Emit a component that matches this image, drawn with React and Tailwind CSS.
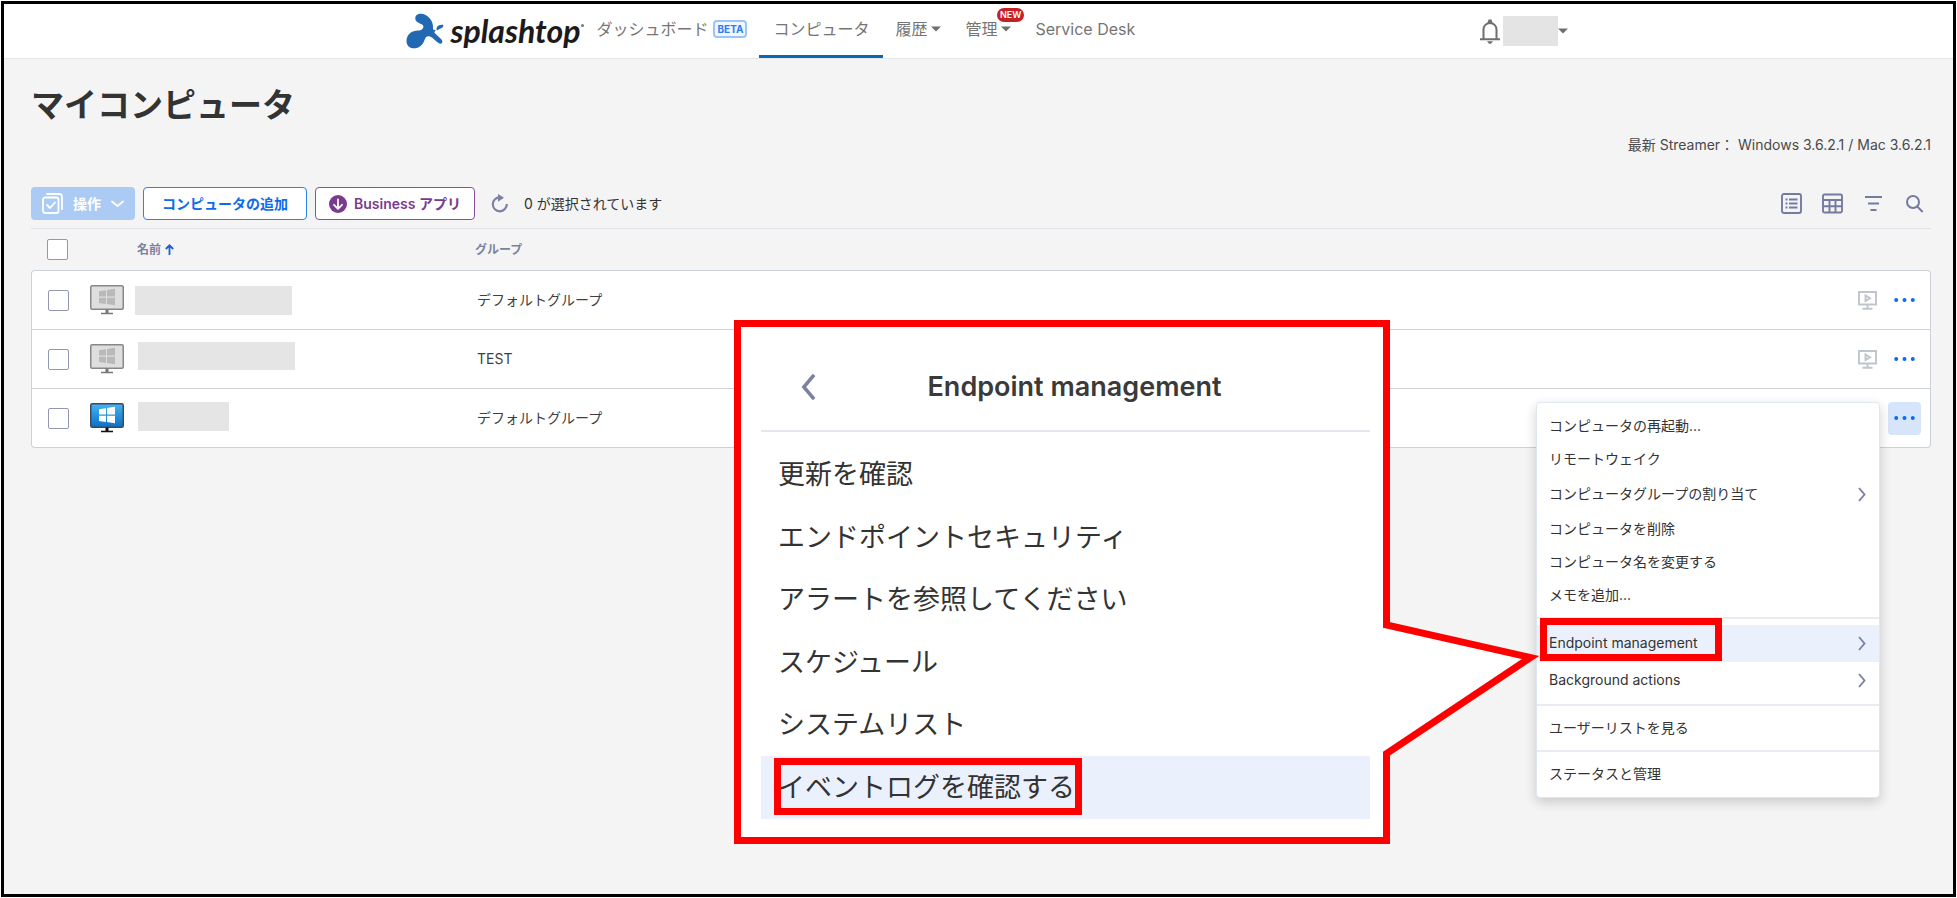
import clsx from 'clsx';

const FONT = "font-[Inter,'Noto_Sans_CJK_JP',sans-serif]";

const computers = [
  { id: 1, group: 'デフォルトグループ', online: false, mask: 'ml-[11px] h-[29px] w-[157px]' },
  { id: 2, group: 'TEST', online: false, mask: 'ml-[14px] mb-[7px] h-7 w-[157px]' },
  { id: 3, group: 'デフォルトグループ', online: true, mask: 'ml-[14px] mb-1 h-[29px] w-[91px]' },
];

const menuGroups = [
  [
    { label: 'コンピュータの再起動...' },
    { label: 'リモートウェイク' },
    { label: 'コンピュータグループの割り当て', sub: true },
    { label: 'コンピュータを削除' },
    { label: 'コンピュータ名を変更する' },
    { label: 'メモを追加...' },
  ],
  [
    { label: 'Endpoint management', sub: true, active: true },
    { label: 'Background actions', sub: true },
  ],
  [{ label: 'ユーザーリストを見る' }],
  [{ label: 'ステータスと管理' }],
];

const endpointItems = [
  '更新を確認',
  'エンドポイントセキュリティ',
  'アラートを参照してください',
  'スケジュール',
  'システムリスト',
  'イベントログを確認する',
];

function Caret() {
  return (
    <svg className="h-[6px] w-[10px]" viewBox="0 0 10 6" fill="#6f6f6f">
      <path d="M0 0.5h10L5 5.5z" />
    </svg>
  );
}

function Chevron({ className }) {
  return (
    <svg className={className} viewBox="0 0 8 15" fill="none" stroke="#7c81a3" strokeWidth="1.9">
      <path d="M1 1l5.500 6.500L1 14" />
    </svg>
  );
}

function Logo() {
  return (
    <a href="#" className="flex items-center" aria-label="splashtop">
      <svg className="h-[36px] w-[38px]" viewBox="0 0 38 36" fill="#2169b3">
        <path d="M9.300 5.500C9.300 2 12 0.500 15.500 0.800C22 1.500 27.500 8 27 14.500C26.900 16.500 27.500 17.200 28.500 16.800C29.500 16.500 30 17.500 29 18.300C28 19.200 28.300 20 29.500 20.800L35 26C38 29 35.500 32 32.500 30C29 27.500 27.500 25 24 23.500C21 22.500 19.500 24 18.500 27C17 32 13 35.300 8 35.300C3 35.300 0.500 32 0.500 28C0.500 21.500 6 17.500 12 17.500C15.500 17.500 17.800 15.500 17.300 13C16.500 10 9.300 10.500 9.300 5.500Z" />
        <path d="M31 17.500C29.500 14.500 32 11 37.300 11.800C37.800 15.500 34.500 15 31 17.500Z" />
      </svg>
      <span className="ml-[7px] font-[Lato,sans-serif] text-[32px] leading-9 font-bold text-[#1d1a1b] italic">splashtop</span>
      <span className="mb-3 ml-px size-[3px] rounded-full bg-[#777]" />
    </a>
  );
}

function Header() {
  return (
    <header className="border-b border-[#e6e6e6] bg-white text-base text-[#757575]">
      <div className="mx-auto flex h-[54px] max-w-[1178px] items-stretch pl-4">
        <Logo />
        <nav className="flex items-stretch">
          <a href="#" className="flex items-center gap-[5px] px-3 pt-2 pb-3">
            ダッシュボード
            <span className="rounded-[4px] border-2 border-[#9cc3fa] bg-[#f1f7ff] px-[2px] text-[10px] leading-[14px] font-bold text-[#2a7df0]">BETA</span>
          </a>
          <a href="#" className="flex items-center border-b-[3px] border-[#0a67b4] px-[14px] pt-2 pb-[9px]">コンピュータ</a>
          <a href="#" className="flex items-center gap-1 px-3 pt-2 pb-3">
            履歴
            <Caret />
          </a>
          <a href="#" className="relative flex items-center gap-1 px-3 pt-2 pb-3">
            管理
            <Caret />
            <span className="absolute top-1 -right-px rounded-full bg-[#c81e25] px-[3px] text-[9px] leading-[14px] font-semibold text-white">NEW</span>
          </a>
          <a href="#" className="flex items-center px-3 pt-2 pb-3">Service Desk</a>
        </nav>
        <div className="ml-auto flex items-center">
          <button aria-label="通知" className="mr-[3px] flex">
            <svg className="h-[25px] w-5" viewBox="0 0 20 25" fill="none" stroke="#6f6f6f" strokeWidth="2">
              <path d="M3.500 20V10.500a6.500 6.500 0 0 1 13 0V20M0 20.300h20" />
              <path d="M8.500 0.500h3l1 3.500h-5zM7 22.300h6l-2 2.400h-2z" fill="#6f6f6f" stroke="none" />
            </svg>
          </button>
          <button aria-label="アカウント" className="flex items-center">
            <span className="h-[30px] w-[55px] bg-[#e4e4e4]" />
            <Caret />
          </button>
        </div>
      </div>
    </header>
  );
}

function Toolbar() {
  return (
    <div className="mt-8 flex items-center border-b border-[#e0e4ea] pb-2 text-sm">
      <button className="flex h-[33px] items-center rounded-[4px] bg-[#abcbf5] px-[11px] font-bold text-white">
        <svg className="size-[21px]" viewBox="0 0 21 21" fill="none" stroke="#fff" strokeWidth="1.8" strokeLinecap="round" strokeLinejoin="round">
          <rect x="1" y="4.500" width="15.500" height="15.500" rx="2" />
          <path d="M5 1h12.500a2.500 2.500 0 0 1 2.500 2.500V16M5 12l3 3 5-5.500" />
        </svg>
        <span className="ml-[10px]">操作</span>
        <svg className="ml-[10px] h-2 w-[13px]" viewBox="0 0 13 8" fill="none" stroke="#fff" strokeWidth="1.800" strokeLinecap="round">
          <path d="M1 1.500l5.500 4.500L12 1.500" />
        </svg>
      </button>
      <button className="ml-2 h-[33px] rounded-[4px] border border-[#2a83f0] bg-white px-[18px] font-semibold text-[#0d6cea]">コンピュータの追加</button>
      <button className="ml-2 flex h-[33px] items-center rounded-[4px] border border-[#8a4f9c] bg-white px-[13px] font-semibold text-[#7a3a8e]">
        <svg className="mr-[7px] size-[18px]" viewBox="0 0 18 18" fill="none" stroke="#fff" strokeWidth="1.800" strokeLinecap="round" strokeLinejoin="round">
          <circle cx="9" cy="9" r="9" fill="#7a3a8e" stroke="none" />
          <path d="M9 4.500v9M5 9.800l4 4 4-4" />
        </svg>
        Business アプリ
      </button>
      <button aria-label="更新" className="ml-4">
        <svg className="h-[19px] w-[17px]" viewBox="0 0 17 19" fill="none" stroke="#7c81a3" strokeWidth="2.2">
          <path d="M9 3.300A7 7 0 1 0 15.800 10" />
          <path d="M7 0l6 3.800L7 7.800z" fill="#7c81a3" stroke="none" />
        </svg>
      </button>
      <span className="ml-4 text-[#333]">0 が選択されています</span>
      <div className="mr-[7px] ml-auto flex items-center text-[#757aa0]">
        <button aria-label="リスト表示">
          <svg className="size-[21px]" viewBox="0 0 21 21" fill="none" stroke="currentColor" strokeWidth="1.900">
            <rect x="1" y="1" width="19" height="19" rx="2" />
            <path d="M8 6.500h8.500M8 10.500h8.500M8 14.500h8.500M4.500 6.500h2M4.500 10.500h2M4.500 14.500h2" />
          </svg>
        </button>
        <button aria-label="表形式" className="ml-5">
          <svg className="size-[21px]" viewBox="0 0 21 21" fill="none" stroke="currentColor" strokeWidth="1.900">
            <rect x="1" y="1.500" width="19" height="18" rx="1.500" />
            <path d="M1 7h19M1 13.200h19M7.500 7.500v12M13.500 7.500v12" />
          </svg>
        </button>
        <button aria-label="フィルター" className="ml-[22px]">
          <svg className="h-[17px] w-[17px]" viewBox="0 0 17 17" stroke="currentColor" strokeWidth="1.900">
            <path d="M0 2h17M3 8.500h11M5.500 15h6" />
          </svg>
        </button>
        <button aria-label="検索" className="ml-6">
          <svg className="size-[18px]" viewBox="0 0 18 18" fill="none" stroke="currentColor" strokeWidth="2">
            <circle cx="7" cy="7" r="6" />
            <path d="M11.200 11.500l5.500 5.500" />
          </svg>
        </button>
      </div>
    </div>
  );
}

function WindowsMonitor({ online }) {
  return (
    <svg className="h-[30px] w-[34px]" viewBox="0 0 34 30">
      <defs>
        <linearGradient id="screen" x1="0" y1="0" x2="0" y2="1">
          <stop offset="0" stopColor="#45b4f5" />
          <stop offset="1" stopColor="#0b6fc8" />
        </linearGradient>
      </defs>
      <rect x="0.750" y="0.750" width="32.500" height="23.500" rx="1.500" fill={online ? 'url(#screen)' : '#dedede'} stroke={online ? '#3d4a57' : '#878787'} strokeWidth="1.500" />
      <path d="M9 6.200l7-1v6.300H9zM17 5l8-1.200v7.700h-8zM9 12.700h7V19l-7-1zM17 12.700h8v7.500l-8-1.200z" fill={online ? '#fff' : '#b9b9b9'} />
      <path d="M15.500 24.500h3v3.300h4.500v1.400H11v-1.400h4.500z" fill={online ? '#111' : '#777'} />
    </svg>
  );
}

function RemoteIcon() {
  return (
    <svg className="h-[19px] w-[19px]" viewBox="0 0 19 19" fill="none" stroke="#bfc5cc" strokeWidth="1.900">
      <path d="M1 1h17v12.500H1zM9.500 13.500V18M4.500 17.800h10M7.500 4.500v5.500l4.500-2.700z" />
    </svg>
  );
}

function Checkbox({ label }) {
  return <input type="checkbox" aria-label={label} className="block size-[21px] appearance-none rounded-[2px] border border-[#9396b4] bg-white" />;
}

function Dots() {
  return (
    <svg className="h-1 w-[21px]" viewBox="0 0 21 4" fill="#0a6cf0">
      <circle cx="2.200" cy="2" r="2" />
      <circle cx="10.500" cy="2" r="2" />
      <circle cx="18.800" cy="2" r="2" />
    </svg>
  );
}

function EndpointCallout() {
  return (
    <div className="absolute -top-[83px] right-full mr-[147px] w-[656px] border-[7px] border-[#f00] bg-white pt-[14px] pr-[13px] pb-[18px] pl-5 text-[27px] text-[#333]">
      <div className="flex h-[91px] items-center justify-center border-b-2 border-[#e4e7ee] pt-1">
        <button aria-label="戻る" className="-mr-[54px] ml-10">
          <Chevron className="h-7 w-[15px] -scale-x-100" />
        </button>
        <h2 className="flex-1 pl-[17px] text-center font-semibold text-[#3a3a3a]">Endpoint management</h2>
      </div>
      <ul className="mt-3 grid h-[375px] grid-rows-6">
        {endpointItems.map((item, i) => (
          <li key={item} className={clsx('relative flex', i === 5 && 'bg-[#eaf1fc]')}>
            <button className="w-full pt-[2px] pl-[17px] text-left">{item}</button>
            {i === 5 && <span className="pointer-events-none absolute top-[2px] left-[13px] h-[57px] w-[308px] border-[7px] border-[#f00]" />}
          </li>
        ))}
      </ul>
      {/* tail pointing at the menu entry */}
      <svg className="absolute top-[289px] -right-[163px] h-[150px] w-[163px]" viewBox="0 0 163 150">
        <path d="M0 9.500H7V137.500H0z" fill="#fff" />
        <path d="M3.500 0V9L147.500 41.500L3.500 137.500V150" fill="#fff" stroke="#f00" strokeWidth="7" />
      </svg>
    </div>
  );
}

const groupPadding = ['pt-[7px] pb-[5px]', 'pt-[6px] pb-[5px]', 'pt-[6px] pb-[5px]', 'py-[6px]'];

function ContextMenu() {
  return (
    <div className="absolute top-0 right-full z-10 mr-2 w-[344px] rounded-[4px] border border-[#e1e7f0] bg-white text-left text-sm text-[#333] shadow-[0_4px_12px_rgba(0,0,0,0.18)]">
      {menuGroups.map((group, i) => (
        <ul key={group[0].label} className={clsx(groupPadding[i], i > 0 && 'border-t-2 border-[#e8ecf2]')}>
          {group.map((item) => (
            <li key={item.label} className={clsx('relative', item.active && 'bg-[#eaf1fc]')}>
              <button className={clsx('flex w-full items-center justify-between pr-[13px] pl-3', item.sub ? 'h-[37px]' : 'h-[33px]')}>
                {item.label}
                {item.sub && <Chevron className="h-[15px] w-2" />}
              </button>
              {item.active && <span className="pointer-events-none absolute -top-[7px] left-[3px] h-[43px] w-[182px] border-[7px] border-[#f00]" />}
            </li>
          ))}
        </ul>
      ))}
      <EndpointCallout />
    </div>
  );
}

function ComputerTable() {
  return (
    <table className="w-full table-fixed border-separate border-spacing-0 text-sm text-[#3f3f3f]">
      <thead>
        <tr className="h-[41px] text-left text-xs text-[#7c81a0]">
          <th className="w-[59px] pl-4"><Checkbox label="すべて選択" /></th>
          <th className="w-[385px] pl-[47px]">
            <span className="flex items-center gap-1">
              名前
              <svg className="h-[11px] w-[9px]" viewBox="0 0 9 11" fill="none" stroke="#1c5fd0" strokeWidth="1.800">
                <path d="M4.500 11V1.500M0.800 5l3.700-3.700L8.200 5" />
              </svg>
            </span>
          </th>
          <th>グループ</th>
          <th className="w-[90px]" aria-label="操作" />
        </tr>
      </thead>
      <tbody>
        {computers.map((c, i) => {
          const first = i === 0;
          const last = i === computers.length - 1;
          const cell = clsx('border-b border-[#cdd2d9] bg-white', first ? 'h-[60px] border-t' : 'h-[59px]');
          return (
            <tr key={c.id}>
              <td className={clsx(cell, 'border-l pl-4', first && 'rounded-tl-[4px]', last && 'rounded-bl-[4px]')}>
                <Checkbox label={`コンピュータ ${c.id}`} />
              </td>
              <td className={cell}>
                <div className="flex items-center">
                  <WindowsMonitor online={c.online} />
                  <span className={clsx('bg-[#e5e5e5]', c.mask)} />
                </div>
              </td>
              <td className={clsx(cell, 'pl-[2px]')}>{c.group}</td>
              <td className={clsx(cell, 'border-r pr-[9px]', first && 'rounded-tr-[4px]', last && 'rounded-br-[4px]')}>
                <div className="flex items-center justify-end gap-[11px]">
                  {!last && <button aria-label="リモート接続"><RemoteIcon /></button>}
                  <div className="relative">
                    <button aria-label="その他" className={clsx('flex size-[33px] items-center justify-center rounded-[4px]', last && 'bg-[#d6e5fa]')}>
                      <Dots />
                    </button>
                    {last && <ContextMenu />}
                  </div>
                </div>
              </td>
            </tr>
          );
        })}
      </tbody>
    </table>
  );
}

export default function App() {
  return (
    <div className={clsx('flex min-h-screen bg-white p-px', FONT)} lang="ja">
      <div className="flex-1 border-[3px] border-black bg-[#f4f4f4]">
        <Header />
        <main className="pt-[22px] pr-[22px] pl-[27px]">
          <h1 className="text-[33px] leading-[48px] font-bold text-[#333]">マイコンピュータ</h1>
          <p className="mt-[6px] text-right text-sm text-[#4a4a4a]">最新 Streamer： Windows 3.6.2.1 / Mac 3.6.2.1</p>
          <Toolbar />
          <ComputerTable />
        </main>
      </div>
    </div>
  );
}
